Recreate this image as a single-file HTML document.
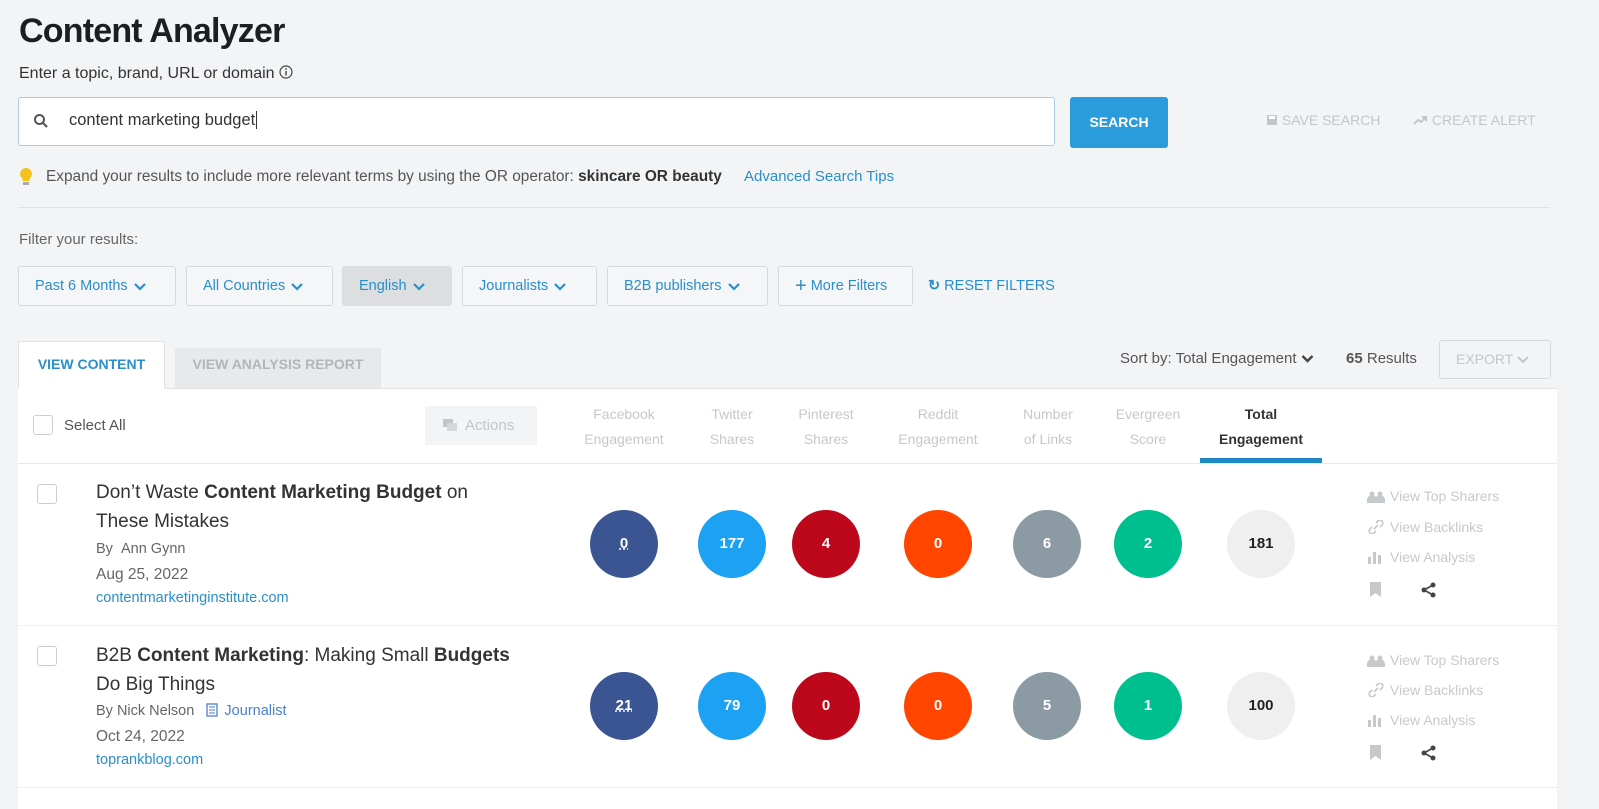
<!DOCTYPE html>
<html><head><meta charset="utf-8"><style>
*{box-sizing:border-box;margin:0;padding:0}
body{width:1599px;height:809px;background:#f3f4f6;font-family:"Liberation Sans",sans-serif;color:#333;position:relative;overflow:hidden}
.a{position:absolute;white-space:nowrap}
h1{position:absolute;left:19px;top:12px;font-size:34px;font-weight:bold;color:#1b1f24;letter-spacing:-0.8px}
.btn{position:absolute;top:266px;height:40px;border:1px solid #d6d9dc;border-radius:3px;background:#f5f6f7;color:#2a8fc9;font-size:14.5px;line-height:38px;padding-left:16px}
.btn svg{vertical-align:middle;margin-left:6px}
.circ{position:absolute;width:68px;height:68px;border-radius:50%;color:#fff;font-weight:bold;font-size:15px;text-align:center;line-height:68px}
.hd{position:absolute;top:402px;width:120px;text-align:center;font-size:14px;line-height:25px;color:#c5c8cb}
.side{position:absolute;left:1367px;font-size:14px;color:#c6c9cc}
.side svg{vertical-align:-2px;margin-right:5px}
.cb{position:absolute;width:20px;height:20px;border:1px solid #c9cdd1;border-radius:3px;background:#fff}
.t{position:absolute;left:96px;font-size:19px;color:#333;line-height:29px}
.m{position:absolute;left:96px;font-size:14.5px;color:#666}
.dm{position:absolute;left:96px;font-size:14.5px;color:#2a8fc9}
</style></head><body>
<h1>Content Analyzer</h1>
<div class="a" style="left:19px;top:65px;font-size:16px;color:#333">Enter a topic, brand, URL or domain <svg width="14" height="14" viewBox="0 0 14 14" style="vertical-align:-1px"><circle cx="7" cy="7" r="6" fill="none" stroke="#444" stroke-width="1.2"/><rect x="6.3" y="6" width="1.4" height="4.5" fill="#444"/><circle cx="7" cy="4" r=".9" fill="#444"/></svg></div>
<div class="a" style="left:18px;top:97px;width:1037px;height:49px;background:#fff;border:1px solid #a9cde3;border-radius:3px"></div>
<svg class="a" style="left:33px;top:113px" width="16" height="16" viewBox="0 0 16 16"><circle cx="6.5" cy="6.5" r="4.5" fill="none" stroke="#555" stroke-width="2"/><path d="M10 10l4 4" stroke="#555" stroke-width="2.2"/></svg>
<div class="a" style="left:69px;top:111px;font-size:16.5px;color:#333">content marketing budget<span style="border-left:1px solid #333;margin-left:1px"></span></div>
<div class="a" style="left:1070px;top:97px;width:98px;height:51px;background:#2a9cdb;border-radius:3px;color:#fff;font-weight:bold;font-size:14px;text-align:center;line-height:51px">SEARCH</div>
<div class="a" style="left:1266px;top:112px;font-size:14px;color:#c3c6c9"><svg width="12" height="12" viewBox="0 0 12 12" style="vertical-align:-1px"><rect x="1" y="1" width="10" height="10" rx="1" fill="#c3c6c9"/><rect x="3" y="2" width="6" height="3" fill="#fff"/></svg> SAVE SEARCH</div>
<div class="a" style="left:1413px;top:112px;font-size:14px;color:#c3c6c9"><svg width="15" height="12" viewBox="0 0 15 12" style="vertical-align:-1px"><path d="M1 10l4-4 3 2 5-5M9 3h4v4" fill="none" stroke="#c3c6c9" stroke-width="2"/></svg> CREATE ALERT</div>
<svg class="a" style="left:19px;top:167px" width="14" height="20" viewBox="0 0 14 20"><path d="M7 1a6 6 0 0 0-3.5 10.8V14h7v-2.2A6 6 0 0 0 7 1z" fill="#f4c21b"/><rect x="4" y="15" width="6" height="3" fill="#aaa"/></svg>
<div class="a" style="left:46px;top:168px;font-size:15.4px;color:#555">Expand your results to include more relevant terms by using the OR operator: <b style="color:#333">skincare OR beauty</b></div>
<div class="a" style="left:744px;top:168px;font-size:15px;color:#2a8fc9">Advanced Search Tips</div>
<div class="a" style="left:18px;top:207px;width:1532px;height:1px;background:#dfe1e3"></div>
<div class="a" style="left:19px;top:231px;font-size:15px;color:#666">Filter your results:</div>
<svg width="0" height="0" style="position:absolute"><defs><path id="chev" d="M1 2l5 5 5-5" fill="none" stroke="#2a8fc9" stroke-width="2.2"/></defs></svg>
<div class="btn" style="left:18px;width:158px">Past 6 Months<svg width="12" height="9"><use href="#chev"/></svg></div>
<div class="btn" style="left:186px;width:147px">All Countries<svg width="12" height="9"><use href="#chev"/></svg></div>
<div class="btn" style="left:342px;width:110px;background:#dcdee0;border-color:#dcdee0">English<svg width="12" height="9"><use href="#chev"/></svg></div>
<div class="btn" style="left:462px;width:135px">Journalists<svg width="12" height="9"><use href="#chev"/></svg></div>
<div class="btn" style="left:607px;width:161px">B2B publishers<svg width="12" height="9"><use href="#chev"/></svg></div>
<div class="btn" style="left:778px;width:135px"><span style="font-size:20px;vertical-align:-2px">+</span> More Filters</div>
<div class="a" style="left:928px;top:278px;font-size:14.5px;color:#2a8fc9"><b>&#8635;</b> RESET FILTERS</div>

<div class="a" style="left:18px;top:388px;width:1539px;height:421px;background:#fff;border-top:1px solid #e0e2e4"></div>
<div class="a" style="left:18px;top:341px;width:147px;height:48px;background:#fff;border:1px solid #e0e2e4;border-bottom:none;color:#2a8fc9;font-weight:bold;font-size:14px;text-align:center;line-height:44px">VIEW CONTENT</div>
<div class="a" style="left:175px;top:348px;width:206px;height:40px;background:#e8e9ea;color:#b3b6b9;font-weight:bold;font-size:14px;text-align:center;line-height:32px">VIEW ANALYSIS REPORT</div>
<div class="a" style="left:1120px;top:350px;font-size:15px;color:#555">Sort by: Total Engagement <svg width="13" height="9" viewBox="0 0 12 9"><path d="M1 2l5 5 5-5" fill="none" stroke="#444" stroke-width="2.4"/></svg></div>
<div class="a" style="left:1346px;top:350px;font-size:15px;color:#555"><b>65</b> Results</div>
<div class="a" style="left:1439px;top:340px;width:112px;height:39px;border:1px solid #d6d9dc;border-radius:3px;color:#c3c6c9;font-size:14px;line-height:37px;padding-left:16px">EXPORT <svg width="12" height="9"><path d="M1 2l5 5 5-5" fill="none" stroke="#c3c6c9" stroke-width="2"/></svg></div>

<div class="cb" style="left:33px;top:415px"></div>
<div class="a" style="left:64px;top:417px;font-size:15px;color:#555">Select All</div>
<div class="a" style="left:425px;top:406px;width:112px;height:39px;background:#f3f4f5;border-radius:2px;color:#c3c6c9;font-size:15px;line-height:39px;padding-left:18px"><svg width="14" height="12" style="vertical-align:-1px;margin-right:8px"><rect x="0" y="0" width="10" height="8" fill="#c3c6c9"/><rect x="4" y="4" width="10" height="8" fill="#d5d7d9"/></svg>Actions</div>
<div class="hd" style="left:564px">Facebook<br>Engagement</div>
<div class="hd" style="left:672px">Twitter<br>Shares</div>
<div class="hd" style="left:766px">Pinterest<br>Shares</div>
<div class="hd" style="left:878px">Reddit<br>Engagement</div>
<div class="hd" style="left:988px">Number<br>of Links</div>
<div class="hd" style="left:1088px">Evergreen<br>Score</div>
<div class="hd" style="left:1201px;color:#333;font-weight:bold">Total<br>Engagement</div>
<div class="a" style="left:1200px;top:458px;width:122px;height:5px;background:#1d8ac6"></div>
<div class="a" style="left:18px;top:463px;width:1539px;height:1px;background:#e6e8ea"></div>

<!-- row 1 -->
<div class="cb" style="left:37px;top:484px"></div>
<div class="t" style="top:478px">Don’t Waste <b>Content Marketing Budget</b> on<br>These Mistakes</div>
<div class="m" style="top:541px">By &nbsp;Ann Gynn</div>
<div class="m" style="top:566px;font-size:15.5px">Aug 25, 2022</div>
<div class="dm" style="top:590px">contentmarketinginstitute.com</div>
<div class="circ" style="left:590px;top:510px;background:#3b5593"><u style="text-decoration-style:dotted">0</u></div>
<div class="circ" style="left:698px;top:510px;background:#1da1f2">177</div>
<div class="circ" style="left:792px;top:510px;background:#bd081c">4</div>
<div class="circ" style="left:904px;top:510px;background:#ff4500">0</div>
<div class="circ" style="left:1013px;top:510px;background:#8c9aa4">6</div>
<div class="circ" style="left:1114px;top:510px;background:#00bf8f">2</div>
<div class="circ" style="left:1227px;top:510px;background:#efefef;color:#222">181</div>
<div class="side" style="top:488px"><svg width="18" height="12"><circle cx="5" cy="3" r="2.5" fill="#c6c9cc"/><circle cx="13" cy="3" r="2.5" fill="#c6c9cc"/><path d="M0 12v-3a3 3 0 0 1 10 0v3zM8 12v-3a3 3 0 0 1 10 0v3z" fill="#c6c9cc"/></svg>View Top Sharers</div>
<div class="side" style="top:519px"><svg width="18" height="14"><path d="M7 9l4-4M5 7l-2 2a2.5 2.5 0 0 0 4 4l2-2M13 7l2-2a2.5 2.5 0 0 0-4-4l-2 2" fill="none" stroke="#c6c9cc" stroke-width="1.6"/></svg>View Backlinks</div>
<div class="side" style="top:549px"><svg width="18" height="13"><rect x="1" y="6" width="3" height="7" fill="#c6c9cc"/><rect x="6" y="1" width="3" height="12" fill="#c6c9cc"/><rect x="11" y="4" width="3" height="9" fill="#c6c9cc"/></svg>View Analysis</div>
<svg class="a" style="left:1370px;top:582px" width="11" height="15"><path d="M0 0h11v15l-5.5-4L0 15z" fill="#c6c9cc"/></svg>
<svg class="a" style="left:1421px;top:582px" width="15" height="16"><circle cx="12" cy="3" r="2.5" fill="#444"/><circle cx="3" cy="8" r="2.5" fill="#444"/><circle cx="12" cy="13" r="2.5" fill="#444"/><path d="M12 3L3 8l9 5" fill="none" stroke="#444" stroke-width="1.6"/></svg>
<div class="a" style="left:18px;top:625px;width:1539px;height:1px;border-top:1px dotted #dfe1e3"></div>

<!-- row 2 -->
<div class="cb" style="left:37px;top:646px"></div>
<div class="t" style="top:641px">B2B <b>Content Marketing</b>: Making Small <b>Budgets</b><br>Do Big Things</div>
<div class="m" style="top:703px">By Nick Nelson &nbsp;&nbsp;<span style="color:#4a7fcf"><svg width="14" height="14" style="vertical-align:-2px"><rect x="1" y="1" width="10" height="12" fill="none" stroke="#4a7fcf" stroke-width="1.3"/><path d="M3 4h6M3 7h6M3 10h6" stroke="#4a7fcf"/></svg> Journalist</span></div>
<div class="m" style="top:728px;font-size:15.5px">Oct 24, 2022</div>
<div class="dm" style="top:752px">toprankblog.com</div>
<div class="circ" style="left:590px;top:672px;background:#3b5593"><u style="text-decoration-style:dotted">21</u></div>
<div class="circ" style="left:698px;top:672px;background:#1da1f2">79</div>
<div class="circ" style="left:792px;top:672px;background:#bd081c">0</div>
<div class="circ" style="left:904px;top:672px;background:#ff4500">0</div>
<div class="circ" style="left:1013px;top:672px;background:#8c9aa4">5</div>
<div class="circ" style="left:1114px;top:672px;background:#00bf8f">1</div>
<div class="circ" style="left:1227px;top:672px;background:#efefef;color:#222">100</div>
<div class="side" style="top:652px"><svg width="18" height="12"><circle cx="5" cy="3" r="2.5" fill="#c6c9cc"/><circle cx="13" cy="3" r="2.5" fill="#c6c9cc"/><path d="M0 12v-3a3 3 0 0 1 10 0v3zM8 12v-3a3 3 0 0 1 10 0v3z" fill="#c6c9cc"/></svg>View Top Sharers</div>
<div class="side" style="top:682px"><svg width="18" height="14"><path d="M7 9l4-4M5 7l-2 2a2.5 2.5 0 0 0 4 4l2-2M13 7l2-2a2.5 2.5 0 0 0-4-4l-2 2" fill="none" stroke="#c6c9cc" stroke-width="1.6"/></svg>View Backlinks</div>
<div class="side" style="top:712px"><svg width="18" height="13"><rect x="1" y="6" width="3" height="7" fill="#c6c9cc"/><rect x="6" y="1" width="3" height="12" fill="#c6c9cc"/><rect x="11" y="4" width="3" height="9" fill="#c6c9cc"/></svg>View Analysis</div>
<svg class="a" style="left:1370px;top:745px" width="11" height="15"><path d="M0 0h11v15l-5.5-4L0 15z" fill="#c6c9cc"/></svg>
<svg class="a" style="left:1421px;top:745px" width="15" height="16"><circle cx="12" cy="3" r="2.5" fill="#444"/><circle cx="3" cy="8" r="2.5" fill="#444"/><circle cx="12" cy="13" r="2.5" fill="#444"/><path d="M12 3L3 8l9 5" fill="none" stroke="#444" stroke-width="1.6"/></svg>
<div class="a" style="left:18px;top:787px;width:1539px;height:1px;border-top:1px dotted #dfe1e3"></div>
</body></html>
